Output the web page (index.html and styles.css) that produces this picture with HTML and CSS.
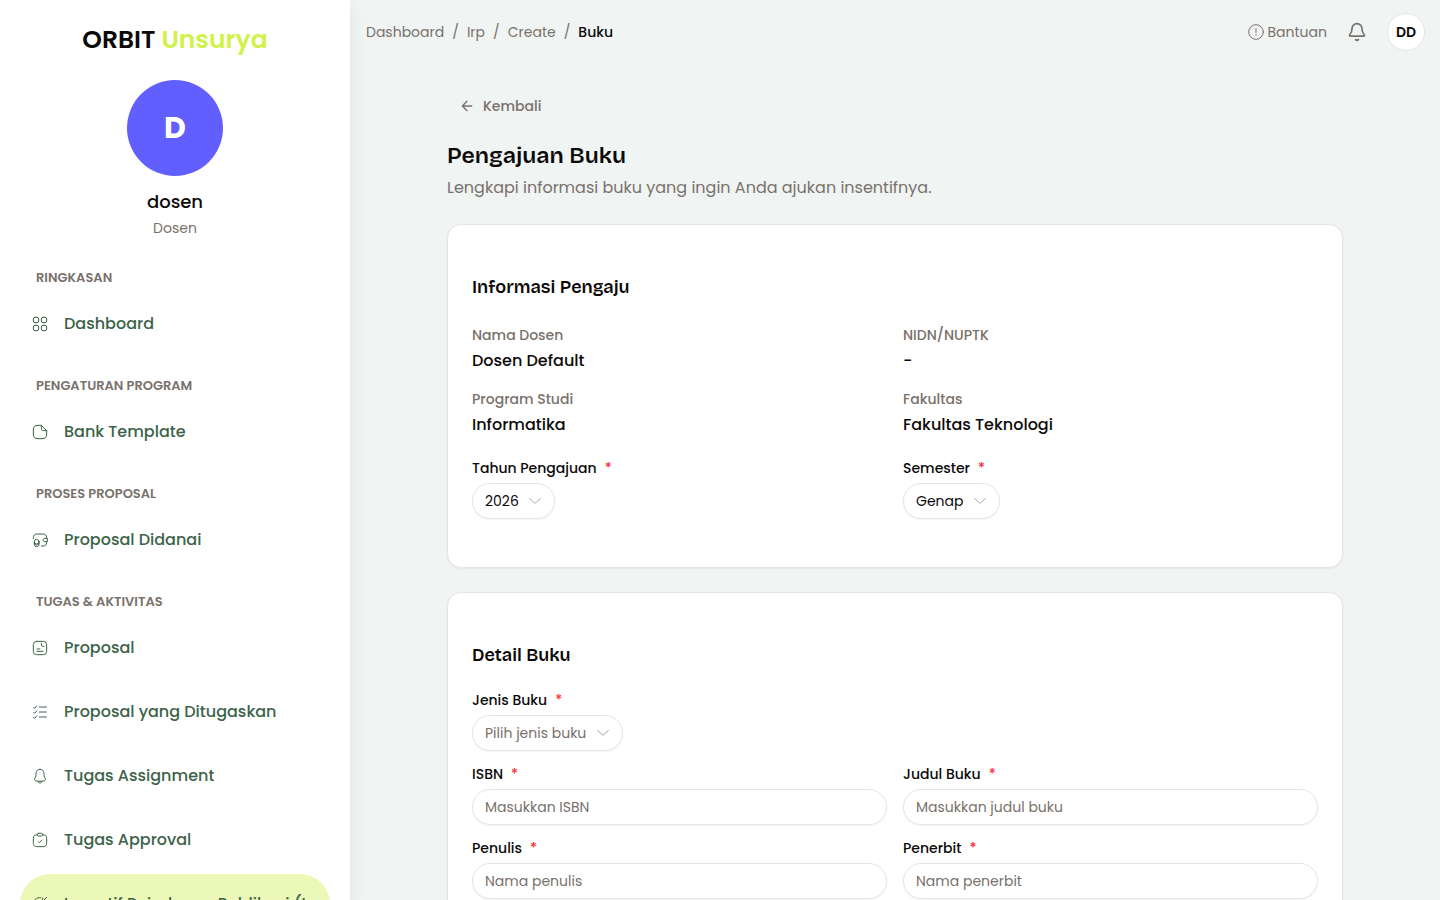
FILE: index.html
```
<!DOCTYPE html>
<html lang="id">
<head>
    <meta charset="UTF-8">
    <meta name="viewport" content="width=device-width, initial-scale=1.0">
    <title>Pengajuan Buku - ORBIT Unsurya</title>
    <link rel="stylesheet" href="styles.css">
</head>
<body>
    <div class="layout">
        <aside class="sidebar">
            <div class="brand">ORBIT <span>Unsurya</span></div>

            <div class="profile">
                <div class="profile-avatar">D</div>
                <div class="profile-name">dosen</div>
                <div class="profile-role">Dosen</div>
            </div>

            <nav class="menu">
                <div class="menu-group">
                    <h2 class="menu-title">Ringkasan</h2>
                    <a class="menu-item" href="#">
                        <svg class="icon" viewBox="0 0 24 24"><rect x="2" y="2" width="8" height="8" rx="2.5"/><rect x="14" y="2" width="8" height="8" rx="2.5"/><rect x="2" y="14" width="8" height="8" rx="2.5"/><rect x="14" y="14" width="8" height="8" rx="2.5"/></svg>
                        <span>Dashboard</span>
                    </a>
                </div>

                <div class="menu-group">
                    <h2 class="menu-title">Pengaturan Program</h2>
                    <a class="menu-item" href="#">
                        <svg class="icon" viewBox="0 0 24 24"><path d="M22 10v5c0 5-2 7-7 7H9c-5 0-7-2-7-7V9c0-5 2-7 7-7h5"/><path d="M22 10h-4c-3 0-4-1-4-4V2l8 8Z"/></svg>
                        <span>Bank Template</span>
                    </a>
                </div>

                <div class="menu-group">
                    <h2 class="menu-title">Proses Proposal</h2>
                    <a class="menu-item" href="#">
                        <svg class="icon" viewBox="0 0 24 24"><path d="M2 10V8.500C2 5.500 4 3 7 3h10c3 0 5 2.300 5 5v1.500h-2.500c-1.700 0-2.700 1-2.700 2.500s1 2.500 2.700 2.500H22V16c0 3-2 5-5 5h-3"/><path d="M22 9.500h1v5h-1"/><circle cx="7" cy="14.500" r="3.500"/><path d="M3.500 14.500v4.500c0 1.700 1.500 3 3.500 3s3.500-1.300 3.500-3v-4.500M3.500 17c0 1.500 1.500 2.500 3.500 2.500s3.500-1 3.500-2.500"/></svg>
                        <span>Proposal Didanai</span>
                    </a>
                </div>

                <div class="menu-group">
                    <h2 class="menu-title">Tugas &amp; Aktivitas</h2>
                    <a class="menu-item" href="#">
                        <svg class="icon" viewBox="0 0 24 24"><rect x="2" y="2" width="20" height="20" rx="5"/><path d="M14 5v2.500c0 1 1 2 2 2h2M7.500 13.500H12M7.500 17H16.500"/></svg>
                        <span>Proposal</span>
                    </a>
                    <a class="menu-item" href="#">
                        <svg class="icon" viewBox="0 0 24 24"><path d="M11 4.500h10.500M11 12h10.500M11 19.500h10.500M2.500 5l1.500 1.500L7 3M2.500 12.500 4 14l3-3.500M2.500 20 4 21.500 7 18"/></svg>
                        <span>Proposal yang Ditugaskan</span>
                    </a>
                    <a class="menu-item" href="#">
                        <svg class="icon" viewBox="0 0 24 24"><path d="M12 2C8.500 2 6 4.700 6 8v3c0 .800-.300 1.700-.700 2.500L4 15.700c-.800 1.300-.200 2.900 1.300 3.300 4.300 1.300 9.100 1.300 13.400 0 1.500-.500 2-2 1.300-3.300l-1.300-2.200c-.400-.800-.700-1.700-.700-2.500V8c0-3.300-2.500-6-6-6Z"/><path d="M9 20c.500 1.700 1.600 2.500 3 2.500s2.500-.800 3-2.500"/></svg>
                        <span>Tugas Assignment</span>
                    </a>
                    <a class="menu-item" href="#">
                        <svg class="icon" viewBox="0 0 24 24"><path d="M8 4C4 4.200 2 5.500 2 10v6c0 4 1 6 6 6h8c5 0 6-2 6-6v-6c0-4.500-2-5.800-6-6"/><rect x="8" y="2" width="8" height="4" rx="1.800"/><path d="m9.500 14.500 1.500 1.500 4-4"/></svg>
                        <span>Tugas Approval</span>
                    </a>
                    <a class="menu-item active" href="#">
                        <svg class="icon" viewBox="0 0 24 24"><path d="M13 2.500C7 1.500 2 6 2 12s4.500 10 10 10 10-4.500 10-10M12 12l10-10M16 3v5h5"/></svg>
                        <span>Insentif Reimburse Publikasi (IRP)</span>
                    </a>
                </div>
            </nav>
        </aside>

        <div class="page">
            <header class="topbar">
                <nav class="breadcrumb">
                    <a href="#">Dashboard</a>
                    <span>/</span>
                    <a href="#">Irp</a>
                    <span>/</span>
                    <a href="#">Create</a>
                    <span>/</span>
                    <strong>Buku</strong>
                </nav>
                <div class="topbar-actions">
                    <a class="help-link" href="#">
                        <svg class="icon" viewBox="0 0 24 24"><circle cx="12" cy="12" r="11"/><path d="M12 7v6M12 16v1"/></svg>
                        Bantuan
                    </a>
                    <button class="bell-button" type="button" aria-label="Notifikasi">
                        <svg viewBox="0 0 24 24"><path d="M10.268 21a2 2 0 0 0 3.464 0"/><path d="M3.262 15.326A1 1 0 0 0 4 17h16a1 1 0 0 0 .740-1.673C19.410 13.956 18 12.499 18 8A6 6 0 0 0 6 8c0 4.499-1.411 5.956-2.738 7.326"/></svg>
                    </button>
                    <button class="user-button" type="button">DD</button>
                </div>
            </header>

            <main class="content">
                <a class="back-link" href="#">
                    <svg class="icon" viewBox="0 0 24 24"><path d="m12 19-7-7 7-7M19 12H5"/></svg>
                    Kembali
                </a>
                <h1>Pengajuan Buku</h1>
                <p class="subtitle">Lengkapi informasi buku yang ingin Anda ajukan insentifnya.</p>

                <form class="form">
                    <section class="card">
                        <h3>Informasi Pengaju</h3>
                        <dl class="grid info">
                            <div>
                                <dt>Nama Dosen</dt>
                                <dd>Dosen Default</dd>
                            </div>
                            <div>
                                <dt>NIDN/NUPTK</dt>
                                <dd>-</dd>
                            </div>
                            <div>
                                <dt>Program Studi</dt>
                                <dd>Informatika</dd>
                            </div>
                            <div>
                                <dt>Fakultas</dt>
                                <dd>Fakultas Teknologi</dd>
                            </div>
                        </dl>
                        <div class="grid">
                            <div class="field">
                                <label for="tahun">Tahun Pengajuan <span>*</span></label>
                                <div class="select">
                                    <select id="tahun">
                                        <option>2026</option>
                                    </select>
                                    <svg class="icon" viewBox="0 0 24 24"><path d="m4 8 6 6c1.500 1.300 2.500 1.300 4 0l6-6"/></svg>
                                </div>
                            </div>
                            <div class="field">
                                <label for="semester">Semester <span>*</span></label>
                                <div class="select">
                                    <select id="semester">
                                        <option>Genap</option>
                                        <option>Ganjil</option>
                                    </select>
                                    <svg class="icon" viewBox="0 0 24 24"><path d="m4 8 6 6c1.500 1.300 2.500 1.300 4 0l6-6"/></svg>
                                </div>
                            </div>
                        </div>
                    </section>

                    <section class="card">
                        <h3>Detail Buku</h3>
                        <div class="grid">
                            <div class="field wide">
                                <label for="jenis">Jenis Buku <span>*</span></label>
                                <div class="select">
                                    <select id="jenis" class="empty">
                                        <option>Pilih jenis buku</option>
                                    </select>
                                    <svg class="icon" viewBox="0 0 24 24"><path d="m4 8 6 6c1.500 1.300 2.500 1.300 4 0l6-6"/></svg>
                                </div>
                            </div>
                            <div class="field">
                                <label for="isbn">ISBN <span>*</span></label>
                                <input id="isbn" type="text" placeholder="Masukkan ISBN">
                            </div>
                            <div class="field">
                                <label for="judul">Judul Buku <span>*</span></label>
                                <input id="judul" type="text" placeholder="Masukkan judul buku">
                            </div>
                            <div class="field">
                                <label for="penulis">Penulis <span>*</span></label>
                                <input id="penulis" type="text" placeholder="Nama penulis">
                            </div>
                            <div class="field">
                                <label for="penerbit">Penerbit <span>*</span></label>
                                <input id="penerbit" type="text" placeholder="Nama penerbit">
                            </div>
                        </div>
                    </section>
                </form>
            </main>
        </div>
    </div>
</body>
</html>
```
FILE: styles.css
```
* {
    margin: 0;
    padding: 0;
    box-sizing: border-box;
}

body {
    font-family: 'Poppins', 'Inter', sans-serif;
    font-size: 16px;
    line-height: 24px;
    color: #0c0a09;
    background: #f0f4f3;
}

a {
    color: inherit;
    text-decoration: none;
}

button,
input,
select {
    font: inherit;
    color: inherit;
}

svg {
    fill: none;
    stroke: currentColor;
    stroke-width: 2;
    stroke-linecap: round;
    stroke-linejoin: round;
}

.icon {
    width: 16px;
    height: 16px;
    flex-shrink: 0;
    stroke-width: 1.5;
}

.layout {
    display: flex;
    height: 100vh;
    overflow: hidden;
}

/* Sidebar */
.sidebar {
    width: 350px;
    flex-shrink: 0;
    padding: 24px 20px 0;
    background: #fff;
    box-shadow: 0 8px 16px rgba(0, 0, 0, 0.08);
    overflow: hidden;
}

.brand {
    font-size: 25px;
    font-weight: 600;
    line-height: 32px;
    text-align: center;
}

.brand span {
    color: #d0f24b;
}

.profile {
    display: flex;
    flex-direction: column;
    align-items: center;
    padding: 24px 0 22px;
}

.profile-avatar {
    display: flex;
    align-items: center;
    justify-content: center;
    width: 96px;
    height: 96px;
    margin-bottom: 12px;
    border-radius: 50%;
    background: #615fff;
    color: #fff;
    font-size: 30px;
    font-weight: 700;
}

.profile-name {
    font-size: 18px;
    font-weight: 500;
    line-height: 28px;
}

.profile-role {
    font-size: 14px;
    color: #79716b;
}

.menu {
    display: flex;
    flex-direction: column;
    gap: 16px;
}

.menu-group {
    display: flex;
    flex-direction: column;
    gap: 4px;
}

.menu-title {
    padding: 4px 16px 0;
    font-size: 13px;
    font-weight: 600;
    line-height: 24px;
    text-transform: uppercase;
    color: #79716b;
}

.menu-item {
    display: flex;
    align-items: center;
    gap: 16px;
    height: 60px;
    padding: 0 12px;
    border-radius: 30px;
    font-weight: 500;
    color: #3c6349;
}

.menu-item span {
    overflow: hidden;
    text-overflow: ellipsis;
    white-space: nowrap;
}

.menu-item.active {
    background: #ecf8b7;
}

/* Top bar */
.page {
    flex: 1;
    min-width: 0;
    overflow: hidden;
}

.topbar {
    display: flex;
    align-items: center;
    justify-content: space-between;
    height: 64px;
    padding: 0 15px 0 16px;
    font-size: 14px;
    color: #79716b;
}

.breadcrumb {
    display: flex;
    gap: 8px;
}

.breadcrumb strong {
    font-weight: 500;
    color: #0c0a09;
}

.topbar-actions {
    display: flex;
    align-items: center;
    gap: 20px;
}

.help-link {
    display: flex;
    align-items: center;
    gap: 4px;
}

.bell-button {
    display: flex;
    border: 0;
    background: none;
}

.bell-button svg {
    width: 20px;
    height: 20px;
}

.user-button {
    width: 38px;
    height: 38px;
    border: 1px solid #e7e5e4;
    border-radius: 50%;
    background: #fff;
    color: #0c0a09;
    font-weight: 600;
}

/* Content */
.content {
    max-width: 944px;
    margin: 0 auto;
    padding: 24px;
}

.back-link {
    display: inline-flex;
    align-items: center;
    gap: 8px;
    height: 36px;
    margin-bottom: 16px;
    padding: 0 12px;
    font-size: 14px;
    font-weight: 500;
    color: #79716b;
}

.back-link .icon {
    stroke-width: 2;
}

h1,
h3 {
    font-family: 'Bricolage Grotesque', 'Poppins', 'Inter', sans-serif;
    font-weight: 600;
}

h1 {
    font-size: 23px;
    line-height: 32px;
}

.subtitle {
    margin: 4px 0 24px;
    color: #79716b;
}

.form {
    display: flex;
    flex-direction: column;
    gap: 24px;
}

.card {
    padding: 48px 24px;
    border: 1px solid #e5e5e5;
    border-radius: 14px;
    background: #fff;
    box-shadow: 0 1px 2px rgba(0, 0, 0, 0.06);
}

.card h3 {
    margin-bottom: 24px;
    font-size: 18px;
    line-height: 28px;
}

.grid {
    display: grid;
    grid-template-columns: 1fr 1fr;
    gap: 16px;
}

.info {
    margin-bottom: 24px;
}

.info dt {
    margin-bottom: 4px;
    font-size: 14px;
    font-weight: 500;
    line-height: 20px;
    color: #79716b;
}

.info dd {
    font-weight: 500;
}

.field {
    display: flex;
    flex-direction: column;
    align-items: flex-start;
    gap: 8px;
}

.wide {
    grid-column: 1 / -1;
}

.field label {
    display: flex;
    gap: 8px;
    font-size: 14px;
    font-weight: 500;
    line-height: 14px;
}

.field label span {
    color: #fb2c36;
}

.field input,
.field select {
    height: 36px;
    padding: 0 12px;
    border: 1px solid #e5e5e5;
    border-radius: 18px;
    background: #fff;
    font-size: 14px;
    box-shadow: 0 1px 2px rgba(0, 0, 0, 0.05);
}

.field input {
    width: 100%;
}

.field input::placeholder,
.field .empty {
    color: #79716b;
    opacity: 1;
}

.select {
    display: grid;
    align-items: center;
}

.select select {
    grid-area: 1 / 1;
    padding-right: 35px;
    appearance: none;
}

.select .icon {
    grid-area: 1 / 1;
    justify-self: end;
    margin-right: 12px;
    color: #a8a29e;
    pointer-events: none;
}
```
